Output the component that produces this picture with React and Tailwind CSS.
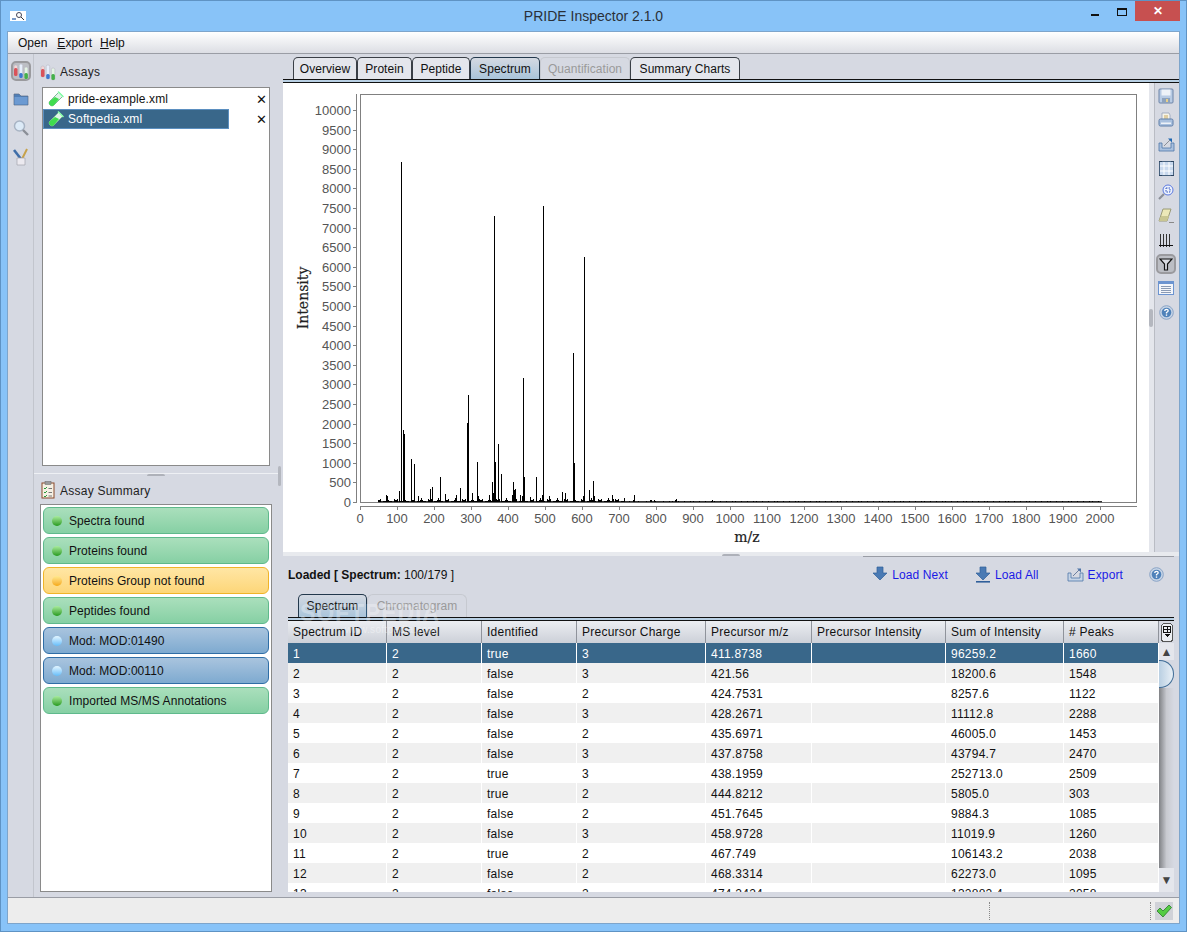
import React from 'react'

const font = { fontFamily: '"Liberation Sans", Arial, sans-serif' }

// x position in px, height in px
const peaks = [
  [386, 7], [387, 6], [399, 11], [401, 340], [403, 72], [404, 68], [411, 43], [414, 38], [418, 6],
  [430, 13], [432, 15], [440, 25], [445, 8], [456, 7], [460, 14], [467, 79], [468, 107], [472, 9],
  [477, 40], [478, 6], [489, 7], [492, 20], [493, 9], [494, 286], [495, 40], [498, 58], [501, 28],
  [512, 7], [513, 20], [514, 12], [515, 13], [520, 7], [522, 6], [523, 124], [524, 25], [530, 5],
  [536, 25], [542, 7], [543, 296], [549, 6], [562, 10], [565, 9], [573, 149], [574, 39], [583, 6],
  [584, 245], [589, 12], [593, 21], [594, 6], [612, 7], [624, 4], [634, 7], [654, 2], [613, 3],
  [675, 2], [676, 3], [711, 1], [712, 2],
]

const noise = []
for (let x = 378; x < 660; x++) {
  const v = (x * 37 + x * x * 11) % 17
  if (x < 625 ? v < 13 : v < 3) noise.push([x, 1 + (v % 4)])
}
for (let x = 660; x < 1102; x += 3) {
  if ((x * 13) % 7 < 4) noise.push([x, 1])
}

const yTicks = Array.from({ length: 21 }, (_, i) => i * 500)
const xTicks = Array.from({ length: 21 }, (_, i) => i * 100)

function Chart() {
  return (
    <svg width="866" height="469" viewBox="283 83 866 469" className="block" shapeRendering="crispEdges">
      <rect x="360.5" y="94.5" width="776" height="408" fill="#fff" stroke="#808080" />
      <line x1="356.5" y1="94" x2="356.5" y2="503" stroke="#808080" />
      <line x1="360" y1="506.5" x2="1137" y2="506.5" stroke="#808080" />
      {yTicks.map((v) => {
        const y = Math.round(502 - v * 0.0392)
        return (
          <g key={v}>
            <line x1="353" y1={y + 0.5} x2="356" y2={y + 0.5} stroke="#808080" />
            <text x="351" y={y + 5} textAnchor="end" fontSize="13" fill="#555" style={font} shapeRendering="auto">{v}</text>
          </g>
        )
      })}
      {xTicks.map((v) => {
        const x = Math.round(360 + v * 0.37)
        return (
          <g key={v}>
            <line x1={x + 0.5} y1="507" x2={x + 0.5} y2="510" stroke="#808080" />
            <text x={x} y="523" textAnchor="middle" fontSize="13" fill="#555" style={font}>{v}</text>
          </g>
        )
      })}
      <line x1="378" y1="501.5" x2="1102" y2="501.5" stroke="#333" />
      <line x1="378" y1="502.5" x2="1102" y2="502.5" stroke="#666" />
      {noise.map(([x, h], i) => (
        <line key={i} x1={x + 0.5} y1={502 - h} x2={x + 0.5} y2="502" stroke="#000" />
      ))}
      {peaks.map(([x, h]) => (
        <line key={x} x1={x + 0.5} y1={502 - h} x2={x + 0.5} y2="502" stroke="#000" />
      ))}
      <text
        transform="translate(308 298) rotate(-90)"
        textAnchor="middle"
        fontSize="14"
        fill="#222"
        stroke="#222"
        strokeWidth="0.2"
        shapeRendering="auto"
        style={{ fontFamily: '"DejaVu Serif", serif' }}
      >
        Intensity
      </text>
      <text
        x="747"
        y="542"
        textAnchor="middle"
        fontSize="14"
        fill="#222"
        stroke="#222"
        strokeWidth="0.2"
        shapeRendering="auto"
        style={{ fontFamily: '"DejaVu Serif", serif' }}
      >
        m/z
      </text>
    </svg>
  )
}

function TubeIcon() {
  return (
    <svg width="18" height="18" viewBox="0 0 18 18" className="shrink-0">
      <path d="M12 2 L16 6 L7 15 Q5 17 3 15 Q1 13 3 11 Z" fill="#dff5e6" stroke="#7fb89a" />
      <path d="M8 7 L12 9 L7 15 Q5 17 3 15 Q1 13 3 11 Z" fill="#3fdc4f" />
      <path d="M11 1.5 L16.5 7" stroke="#8fa" strokeWidth="1.5" />
    </svg>
  )
}

function AssayIcon() {
  return (
    <svg width="16" height="17" viewBox="0 0 16 17" className="shrink-0">
      <rect x="1" y="2" width="3.5" height="11" rx="1.5" fill="#f2d6d6" stroke="#b9b9c4" strokeWidth="0.6" />
      <rect x="1" y="5" width="3.5" height="8" rx="1.5" fill="#d9535a" />
      <rect x="6.2" y="1" width="3.5" height="14" rx="1.5" fill="#e6eefb" stroke="#b9b9c4" strokeWidth="0.6" />
      <rect x="6.2" y="10" width="3.5" height="5" rx="1.5" fill="#3b78d0" />
      <rect x="11.4" y="4" width="3.5" height="12" rx="1.5" fill="#e4f4e4" stroke="#b9b9c4" strokeWidth="0.6" />
      <rect x="11.4" y="10" width="3.5" height="6" rx="1.5" fill="#45b04a" />
    </svg>
  )
}

function RailIcons() {
  return (
    <div className="flex w-[26px] shrink-0 flex-col items-center border-r border-[#c2c5cd] pt-[7px]">
      <div className="flex h-[20px] w-[20px] items-center justify-center rounded-[5px] border-2 border-[#9a9a9e] bg-[#bcbec4]">
        <AssayIcon />
      </div>
      <svg width="16" height="16" viewBox="0 0 16 16" className="mt-[10px]">
        <path d="M1 3 H6 L8 5 H15 V14 H1 Z" fill="#4f7fb8" stroke="#5c6f88" strokeWidth="0.7" />
        <rect x="1.5" y="6" width="13" height="7.5" fill="#6c9ad2" />
      </svg>
      <svg width="18" height="18" viewBox="0 0 18 18" className="mt-[12px]">
        <circle cx="7.5" cy="7" r="5" fill="#dceaf7" stroke="#a8b4c4" strokeWidth="1.5" />
        <path d="M11 11 L16 16" stroke="#8b8f98" strokeWidth="2.4" />
      </svg>
      <svg width="16" height="18" viewBox="0 0 16 18" className="mt-[11px]">
        <path d="M1 2 L8 11" stroke="#3f6ea8" strokeWidth="2.6" />
        <path d="M14 1 L9 11" stroke="#c7a24a" strokeWidth="2" />
        <path d="M4 10 H12 V17 H4 Z" fill="#eceaf0" stroke="#a5a5ad" strokeWidth="0.7" />
      </svg>
    </div>
  )
}

function ClipboardIcon() {
  return (
    <svg width="14" height="18" viewBox="0 0 14 18" className="shrink-0">
      <rect x="1" y="2" width="12" height="15" fill="#f5f0e4" stroke="#8a4a2a" />
      <rect x="4" y="0.5" width="6" height="3" fill="#9a9a9a" stroke="#666" strokeWidth="0.5" />
      <path d="M3 7 L4 8 L6 6 M3 11 L4 12 L6 10 M3 15 L4 16 L6 14" stroke="#2a9a3a" fill="none" />
      <path d="M7.5 7.5 H11 M7.5 11.5 H11 M7.5 15 H11" stroke="#777" />
    </svg>
  )
}

const summary = [
  ['Spectra found', 'green'],
  ['Proteins found', 'green'],
  ['Proteins Group not found', 'yellow'],
  ['Peptides found', 'green'],
  ['Mod: MOD:01490', 'blue'],
  ['Mod: MOD:00110', 'blue'],
  ['Imported MS/MS Annotations', 'green'],
]

const pill = {
  green: 'border-[#5fb98c] bg-gradient-to-b from-[#aadfbc] to-[#86d0a4]',
  yellow: 'border-[#f0b428] bg-gradient-to-b from-[#ffe6a4] to-[#fdd678]',
  blue: 'border-[#2f6ea6] bg-gradient-to-b from-[#a9c4de] to-[#7eaad0]',
}
const dot = {
  green: 'from-[#a8ec9c] to-[#1f9a16]',
  yellow: 'from-[#ffe98c] to-[#f4a800]',
  blue: 'from-[#e4f6ff] to-[#62bcf8]',
}

function LeftPanel() {
  return (
    <div className="flex w-[244px] shrink-0 flex-col">
      <div className="flex h-[33px] items-end gap-[4px] pb-[6px] pl-[6px] text-[12px] tracking-[0.02em] text-[#222]">
        <AssayIcon />
        <span>Assays</span>
      </div>
      <div className="mx-[8px] h-[379px] border border-[#8a8a8a] bg-white pt-px text-[12px] tracking-[0.01em]">
        <div className="flex h-[20px] items-center pl-[4px] pr-[1px] text-[#111]">
          <TubeIcon />
          <span className="ml-[3px]">pride-example.xml</span>
          <span className="ml-auto pr-[1px] text-[13px] leading-none">✕</span>
        </div>
        <div className="flex h-[20px] items-center">
          <div className="flex h-[20px] w-[186px] items-center border border-[#5b8fc0] bg-[#39678a] pl-[3px] text-white">
            <TubeIcon />
            <span className="ml-[3px]">Softpedia.xml</span>
          </div>
          <span className="ml-auto pr-[2px] text-[13px] leading-none text-[#111]">✕</span>
        </div>
      </div>
      <div className="flex h-[15px] items-center justify-center border-[#eceef2]">
        <div className="mt-[3px] h-[4px] w-full border-t border-[#eef0f4] text-center">
          <div className="mx-auto h-[3px] w-[18px] rounded-t-[2px] border-t-2 border-[#aeb1b9]" />
        </div>
      </div>
      <div className="flex h-[23px] items-start gap-[5px] pl-[7px] text-[12px] tracking-[0.02em] text-[#222]">
        <ClipboardIcon />
        <span className="pt-px">Assay Summary</span>
      </div>
      <div className="mx-[6px] flex h-[388px] flex-col gap-[3px] border border-[#8a8a8a] bg-white px-[2px] pt-[2px]">
        {summary.map(([label, kind]) => (
          <div
            key={label}
            className={`flex h-[27px] shrink-0 items-center rounded-[6px] border pl-[8px] text-[12px] tracking-[0.005em] text-[#111] ${pill[kind]}`}
          >
            <span className={`h-[10px] w-[10px] rounded-full bg-gradient-to-b ${dot[kind]}`} />
            <span className="ml-[7px]">{label}</span>
          </div>
        ))}
      </div>
    </div>
  )
}

function Tab({ label, active, disabled, className }) {
  return (
    <div
      className={`flex items-center justify-center rounded-t-[5px] border border-b-0 text-[12px] tracking-[0.005em] ${
        active
          ? 'border-[#23384c] bg-gradient-to-b from-[#d4d9e2] to-[#a9c4da] text-[#111]'
          : disabled
            ? 'border-[#c6c9d0] bg-[#d6d9e2] text-[#9a9a9a]'
            : 'border-[#3a3f46] bg-[#e4e6ec] text-[#111]'
      } ${className}`}
    >
      {label}
    </div>
  )
}

function ToolIcon({ children, active }) {
  return (
    <div
      className={`flex h-[20px] w-[20px] items-center justify-center ${
        active ? 'rounded-[5px] border-2 border-[#9a9a9e] bg-[#bcbec4]' : ''
      }`}
    >
      {children}
    </div>
  )
}

function Toolbar() {
  return (
    <div className="flex w-[25px] shrink-0 flex-col items-center gap-[4px] border-l border-[#b9bcc4] pt-[3px] pr-[2px]">
      <ToolIcon>
        <svg width="16" height="16" viewBox="0 0 16 16">
          <rect x="1" y="1" width="14" height="14" rx="1" fill="#b8cbe4" stroke="#6c84a8" />
          <rect x="3.5" y="1.5" width="9" height="6" fill="#eef2f8" />
          <rect x="4" y="10" width="8" height="5" fill="#8ea2bc" />
          <rect x="8" y="11" width="2" height="3" fill="#e8d08a" />
        </svg>
      </ToolIcon>
      <ToolIcon>
        <svg width="16" height="16" viewBox="0 0 16 16">
          <path d="M4 1 H11 L12 3 V8 H4 Z" fill="#f6f3e8" stroke="#8a9ab4" strokeWidth="0.7" />
          <path d="M6 4 H10 M6 6 H10" stroke="#c8a85c" />
          <rect x="1" y="7" width="14" height="7" rx="1.5" fill="#a9c0de" stroke="#5f7ea8" />
          <rect x="3" y="10.5" width="10" height="1.5" fill="#eef2f8" />
        </svg>
      </ToolIcon>
      <ToolIcon>
        <svg width="17" height="15" viewBox="0 0 17 15">
          <path d="M1 6 H4 V11 H13 V6 H16 V14 H1 Z" fill="#a9c0de" stroke="#4f76a8" strokeWidth="0.8" />
          <path d="M6 9 L12 3" stroke="#8b8f98" />
          <path d="M10 1.5 H14 V5.5 Z" fill="#1e66b0" />
        </svg>
      </ToolIcon>
      <ToolIcon>
        <svg width="15" height="15" viewBox="0 0 15 15">
          <rect x="0.5" y="0.5" width="14" height="14" fill="#c9d9ee" stroke="#47617e" />
          <path d="M5 1 V14 M10 1 V14 M1 5 H14 M1 10 H14" stroke="#fff" />
          <path d="M0 0 H3 M12 0 H15 M0 15 H3 M12 15 H15" stroke="#2c4460" strokeWidth="2" />
        </svg>
      </ToolIcon>
      <ToolIcon>
        <svg width="16" height="16" viewBox="0 0 16 16">
          <circle cx="10" cy="6" r="5" fill="#eef3fd" stroke="#5a78e0" />
          <rect x="8" y="4" width="4" height="4" fill="none" stroke="#3354c0" strokeDasharray="1.5 1" />
          <path d="M6 10 L1 15" stroke="#8b8f98" strokeWidth="2.2" />
        </svg>
      </ToolIcon>
      <ToolIcon>
        <svg width="17" height="16" viewBox="0 0 17 16">
          <path d="M5 1 H13 L9 13 H1 Z" fill="#ece8b8" stroke="#9a9a78" />
          <path d="M3 8 H11 L9 13 H1 Z" fill="#c9c692" />
          <path d="M11 14.5 H16" stroke="#888" />
        </svg>
      </ToolIcon>
      <ToolIcon>
        <svg width="14" height="15" viewBox="0 0 14 15" shapeRendering="crispEdges">
          <path d="M1.5 1 V14 M4.5 1 V14 M7.5 1 V14 M10.5 1 V14" stroke="#333" />
          <path d="M0 12.5 H14" stroke="#111" />
        </svg>
      </ToolIcon>
      <ToolIcon active>
        <svg width="14" height="13" viewBox="0 0 14 13">
          <path d="M1 1 H13 L8.5 6 V12 H5.5 V6 Z" fill="#d8dae0" stroke="#111" strokeWidth="1.2" />
        </svg>
      </ToolIcon>
      <ToolIcon>
        <svg width="16" height="14" viewBox="0 0 16 14" shapeRendering="crispEdges">
          <rect x="0.5" y="0.5" width="15" height="13" fill="#f4f6fa" stroke="#6c94d0" />
          <rect x="0.5" y="0.5" width="15" height="2" fill="#6c94d0" />
          <path d="M3 5.5 H13 M3 7.5 H13 M3 9.5 H13 M3 11.5 H13" stroke="#8a9ab4" />
        </svg>
      </ToolIcon>
      <ToolIcon>
        <HelpIcon />
      </ToolIcon>
    </div>
  )
}

function HelpIcon() {
  return (
    <svg width="15" height="15" viewBox="0 0 15 15">
      <circle cx="7.5" cy="7.5" r="6.8" fill="#c6d4e6" stroke="#8aa4c6" />
      <circle cx="7.5" cy="7.5" r="4.8" fill="#4f82ba" />
      <path d="M5.8 6 Q5.8 4.3 7.5 4.3 Q9.2 4.3 9.2 5.8 Q9.2 6.8 7.5 7.5 V8.5" fill="none" stroke="#fff" strokeWidth="1.3" />
      <rect x="6.8" y="9.4" width="1.4" height="1.4" fill="#fff" />
    </svg>
  )
}

function ArrowDown({ bar }) {
  return (
    <svg width="16" height="17" viewBox="0 0 16 17" className="shrink-0">
      <path d="M5 1 H11 V7 H15 L8 14 L1 7 H5 Z" fill="#4a7ab4" stroke="#2f5f9a" strokeWidth="0.7" />
      {bar && <rect x="1" y="15" width="14" height="1.6" fill="#2f5f9a" />}
    </svg>
  )
}

const columns = [
  ['Spectrum ID', 99],
  ['MS level', 95],
  ['Identified', 95],
  ['Precursor Charge', 129],
  ['Precursor m/z', 106],
  ['Precursor Intensity', 134],
  ['Sum of Intensity', 118],
  ['# Peaks', 95],
]

const rows = [
  ['1', '2', 'true', '3', '411.8738', '', '96259.2', '1660'],
  ['2', '2', 'false', '3', '421.56', '', '18200.6', '1548'],
  ['3', '2', 'false', '2', '424.7531', '', '8257.6', '1122'],
  ['4', '2', 'false', '3', '428.2671', '', '11112.8', '2288'],
  ['5', '2', 'false', '2', '435.6971', '', '46005.0', '1453'],
  ['6', '2', 'false', '3', '437.8758', '', '43794.7', '2470'],
  ['7', '2', 'true', '3', '438.1959', '', '252713.0', '2509'],
  ['8', '2', 'true', '2', '444.8212', '', '5805.0', '303'],
  ['9', '2', 'false', '2', '451.7645', '', '9884.3', '1085'],
  ['10', '2', 'false', '3', '458.9728', '', '11019.9', '1260'],
  ['11', '2', 'true', '2', '467.749', '', '106143.2', '2038'],
  ['12', '2', 'false', '2', '468.3314', '', '62273.0', '1095'],
  ['13', '2', 'false', '2', '474.2424', '', '132882.4', '2058'],
]

function SpectrumTable() {
  return (
    <div className="flex h-[271px] pl-[5px] pr-[5px]">
      <div className="h-[271px] w-[871px] overflow-hidden bg-white text-[12px] tracking-[0.02em]">
        <div className="flex h-[22px] bg-gradient-to-b from-[#eceef2] to-[#ccd0d8]">
          {columns.map(([name, w]) => (
            <div
              key={name}
              style={{ width: w }}
              className="flex items-center border-r border-[#8f939b] pl-[5px] text-[#111]"
            >
              {name}
            </div>
          ))}
        </div>
        {rows.map((row, i) => (
          <div
            key={row[0]}
            className={`flex h-[20px] ${
              i === 0 ? 'bg-[#39678a] text-white' : i % 2 === 1 ? 'bg-[#f0f0f0] text-[#111]' : 'bg-white text-[#111]'
            }`}
          >
            {row.map((cell, j) => (
              <div
                key={j}
                style={{ width: columns[j][1] }}
                className="flex items-center border-r border-white pl-[5px] pt-px"
              >
                {cell}
              </div>
            ))}
          </div>
        ))}
      </div>
      <div className="flex w-[15px] flex-col">
        <div className="flex h-[22px] items-center justify-center">
          <svg width="12" height="19" viewBox="0 0 12 19" shapeRendering="crispEdges">
            <rect x="0.5" y="0.5" width="11" height="18" rx="3" fill="#eceef2" stroke="#555" />
            <path d="M2.5 3.5 H9.5 V9.5 H2.5 Z M2.5 6.5 H9.5 M6 3.5 V9.5" fill="none" stroke="#111" />
            <path d="M3 11 H9 L6 14 Z" fill="#111" />
          </svg>
        </div>
        <div className="flex h-[17px] items-center justify-center bg-[#e4e6ec] text-[12px] leading-none text-[#444]">▲</div>
        <div className="h-[28px] w-[15px] rounded-r-[14px] border border-l-0 border-[#3f6c96] bg-gradient-to-r from-[#b9cfe2] to-[#e9f0f6]" />
        <div className="h-[180px] w-[15px] bg-gradient-to-r from-[#808286] via-[#c8cad0] to-[#d6d9e2]" />
        <div className="flex h-[24px] items-center justify-center bg-[#e4e6ec] text-[12px] leading-none text-[#444]">▼</div>
      </div>
    </div>
  )
}

function BottomPanel() {
  return (
    <div className="relative flex h-[341px] flex-col bg-[#d6d9e2]">
      <div className="ml-[580px] mr-[5px] h-px bg-[#9a9da5]" />
      <div className="flex h-[37px] items-center pb-[2px] pl-[5px] text-[12px] text-[#111]">
        <span className="font-bold">Loaded [ Spectrum:</span>
        <span>&nbsp;100/179 ]</span>
        <div className="ml-auto flex items-center pr-[15px] tracking-[0.01em] text-[#1a1ae6]">
          <ArrowDown />
          <span className="ml-[4px]">Load Next</span>
          <span className="ml-[27px]"><ArrowDown bar /></span>
          <span className="ml-[4px]">Load All</span>
          <span className="ml-[28px]">
            <svg width="17" height="15" viewBox="0 0 17 15" className="block">
              <path d="M1 6 H4 V11 H13 V6 H16 V14 H1 Z" fill="#c6d4e6" stroke="#4f76a8" strokeWidth="0.8" />
              <path d="M6 9 L12 3" stroke="#6b7ea0" />
              <path d="M10 1.5 H14 V5.5 Z" fill="#4f76a8" />
            </svg>
          </span>
          <span className="ml-[4px]">Export</span>
          <span className="ml-[26px]"><HelpIcon /></span>
        </div>
      </div>
      <div className="flex h-[23px] pl-[15px]">
        <Tab label="Spectrum" active className="h-[23px] w-[69px]" />
        <Tab label="Chromatogram" disabled className="h-[23px] w-[100px] rounded-t-[6px]" />
      </div>
      <div className="mx-[5px] h-[4px] border-y border-[#111] bg-[#b9d0e4]" />
      <SpectrumTable />
      <div className="absolute left-[17px] top-[40px] text-[23px] font-bold tracking-[0.04em] text-white/30">SOFTPEDIA</div>
      <div className="absolute left-[62px] top-[66px] text-[10px] tracking-[0.03em] text-white/40">www.softpedia.com</div>
    </div>
  )
}

export default function App() {
  return (
    <div
      style={font}
      className="flex h-[932px] w-[1187px] flex-col overflow-hidden border border-[#5f93c4] bg-[#88c3f8] px-[6px] pb-[7px]"
    >
      <div className="relative flex h-[30px] shrink-0 items-start">
        <div className="ml-[3px] mt-[10px] flex h-[10px] w-[16px] items-center justify-center bg-white">
          <svg width="14" height="9" viewBox="0 0 14 9">
            <circle cx="8" cy="3" r="2.5" fill="none" stroke="#445" />
            <path d="M10 5 L13 8" stroke="#333" />
            <path d="M1 7 H5" stroke="#7a9ac8" strokeWidth="2" />
          </svg>
        </div>
        <div className="flex-1 pl-[70px] pt-[5px] text-center text-[14px] text-[#2a3038]">PRIDE Inspector 2.1.0</div>
        <div className="flex items-start">
          <div className="mr-[18px] mt-[13px] h-[2px] w-[8px] bg-[#111]" />
          <div className="mr-[8px] mt-[7px] h-[8px] w-[10px] border border-t-2 border-[#111]" />
          <div className="flex h-[20px] w-[45px] items-center justify-center bg-[#c75050] text-[12px] font-bold leading-none text-white">✕</div>
        </div>
      </div>

      <div className="flex min-h-0 flex-1 flex-col border border-[#7ea5cb] bg-[#d6d9e2]">
        <div className="flex h-[22px] shrink-0 items-center gap-[10px] border-b border-[#9a9da5] bg-gradient-to-b from-white to-[#dcdee4] pl-[10px] text-[12px] text-[#111]">
          <span>Open</span>
          <span className="-mr-[2px]"><span className="underline">E</span>xport</span>
          <span><span className="underline">H</span>elp</span>
        </div>

        <div className="flex min-h-0 flex-1">
          <RailIcons />
          <LeftPanel />
          <div className="flex w-[5px] shrink-0 items-center bg-[#d6d9e2]">
            <div className="h-[20px] w-[3px] rounded-[2px] bg-[#b4b7bf]" />
          </div>
          <div className="flex min-w-0 flex-1 flex-col">
            <div className="flex h-[25px] shrink-0 items-end pl-[10px]">
              <Tab label="Overview" className="h-[22px] w-[64px]" />
              <Tab label="Protein" className="h-[22px] w-[55px]" />
              <Tab label="Peptide" className="h-[22px] w-[58px]" />
              <Tab label="Spectrum" active className="h-[22px] w-[70px]" />
              <Tab label="Quantification" disabled className="h-[22px] w-[90px]" />
              <Tab label="Summary Charts" className="h-[22px] w-[110px]" />
            </div>
            <div className="h-[4px] shrink-0 border-y border-[#111] bg-[#b9d0e4]" />
            <div className="flex h-[469px] shrink-0 bg-white">
              <Chart />
              <div className="flex w-[5px] shrink-0 items-center bg-[#e4e6ec]">
                <div className="h-[18px] w-[4px] rounded-[2px] bg-[#b4b7bf]" />
              </div>
              <div className="flex flex-1 bg-[#d6d9e2]">
                <Toolbar />
              </div>
            </div>
            <div className="flex h-[4px] shrink-0 items-end justify-center bg-[#e8eaee]">
              <div className="h-[2px] w-[18px] rounded-t-[2px] bg-[#aeb1b9]" />
            </div>
            <BottomPanel />
          </div>
        </div>

        <div className="flex h-[26px] shrink-0 items-center border-t border-[#9a9da5] bg-[#ededed]">
          <div className="ml-[981px] h-[18px] border-l border-dotted border-[#888]" />
          <div className="ml-[160px] h-[18px] border-l border-dotted border-[#888]" />
          <div className="ml-[4px] flex h-[18px] w-[18px] items-center justify-center bg-[#d0d2d8]">
            <svg width="16" height="14" viewBox="0 0 16 14">
              <path d="M1 7 L4 4 L7 7 L13 1 L15.5 3.5 L7 13 Z" fill="#55cc44" stroke="#2a7a2a" strokeWidth="0.8" />
            </svg>
          </div>
        </div>
      </div>
    </div>
  )
}
